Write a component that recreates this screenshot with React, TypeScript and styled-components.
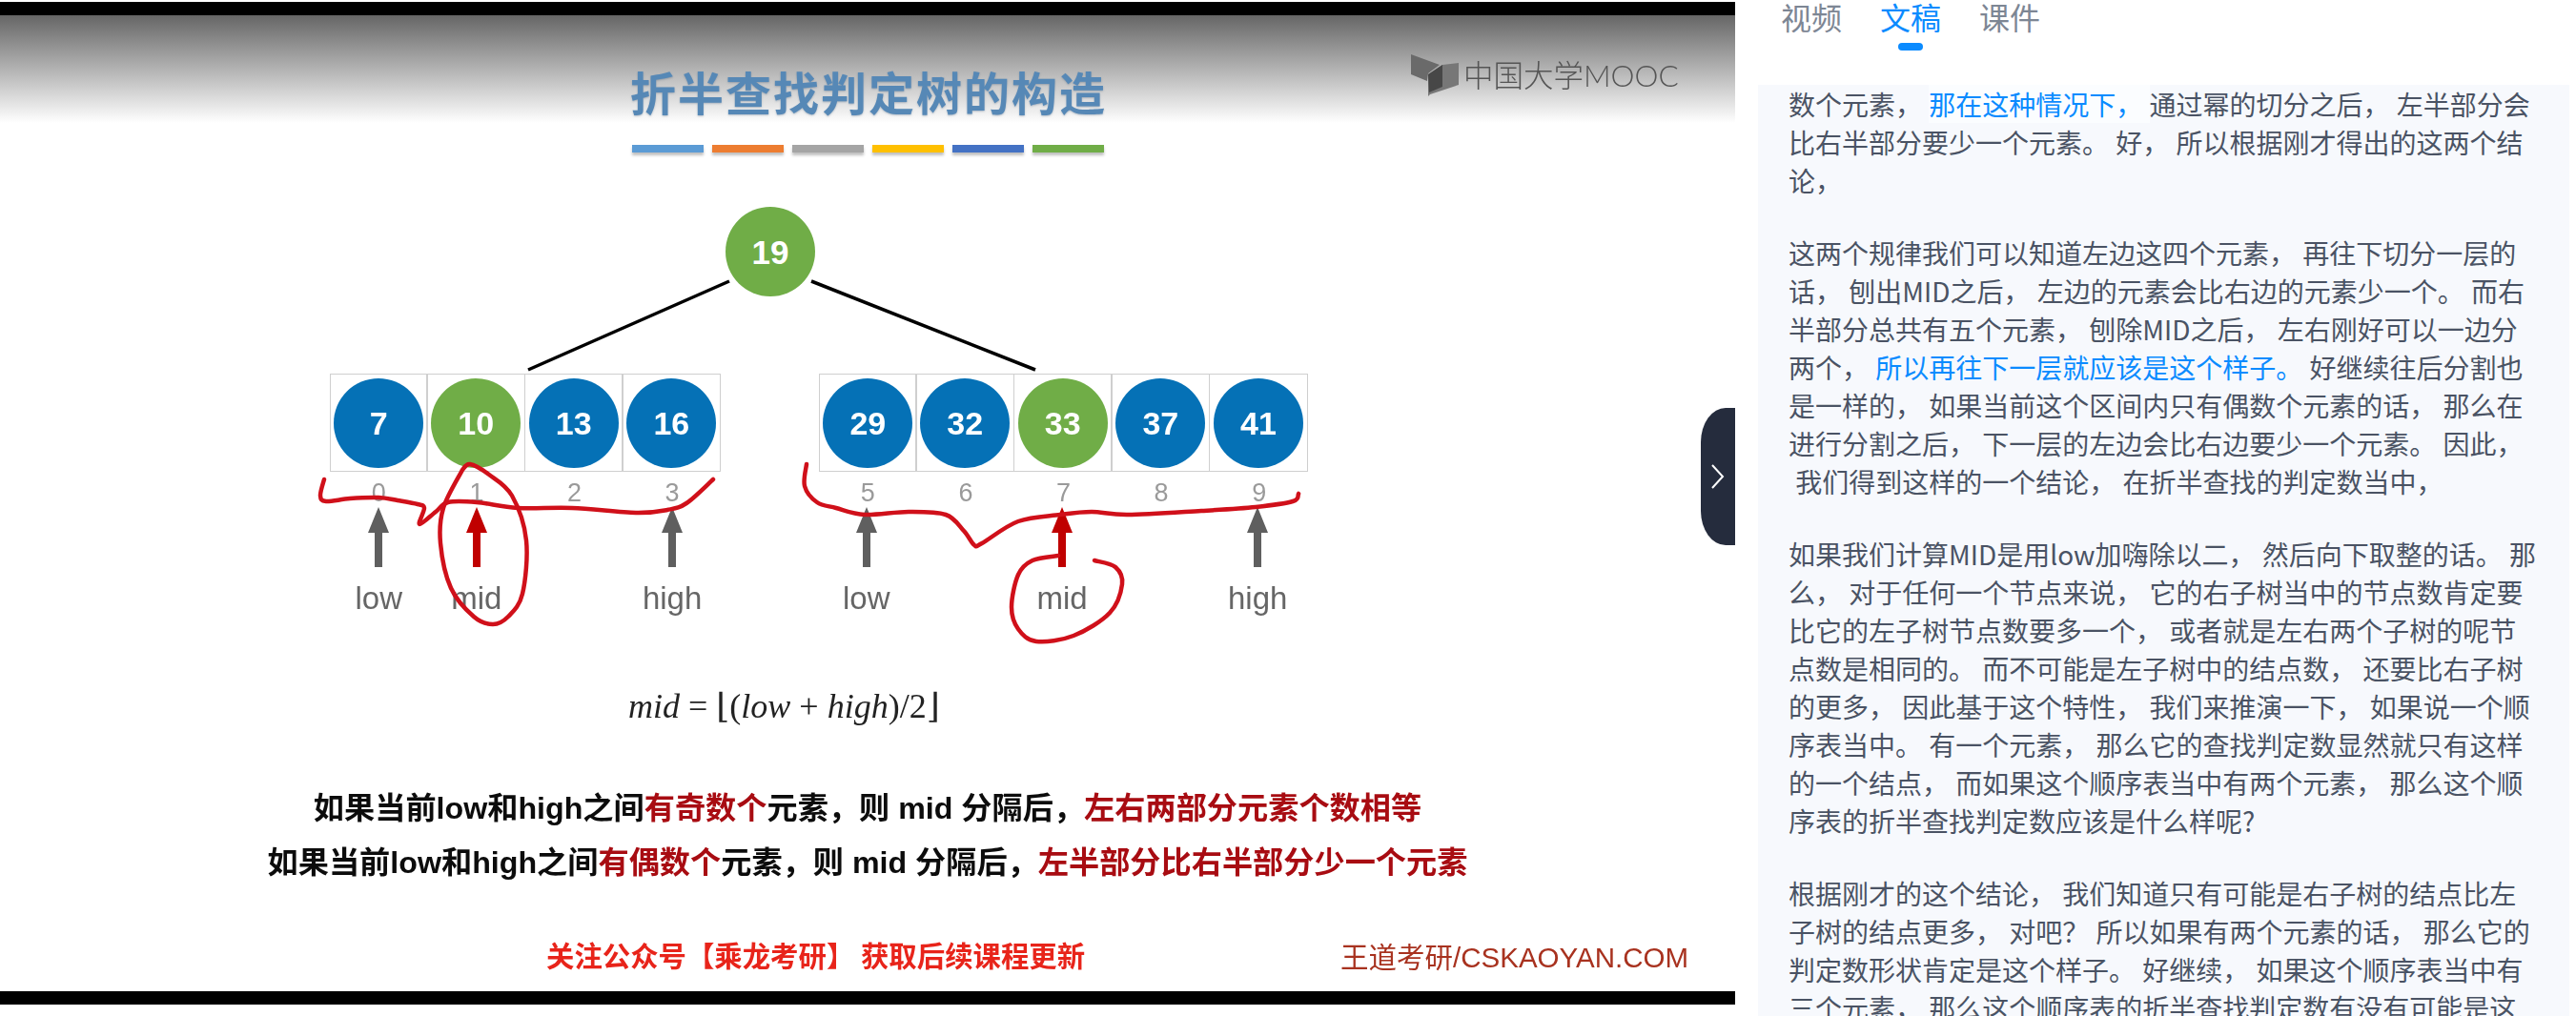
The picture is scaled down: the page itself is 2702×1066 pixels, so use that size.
import React from 'react';
import styled, { createGlobalStyle } from 'styled-components';

const CJK = '"Noto Sans CJK SC", sans-serif';
const ARIAL_CJK = '"Liberation Sans", "Noto Sans CJK SC", sans-serif';

const GlobalStyle = createGlobalStyle`
  html, body {
    margin: 0;
    padding: 0;
    background: #fff;
    overflow: hidden;
  }
`;

const Page = styled.div`
  display: flex;
  width: 2702px;
  height: 1066px;
  overflow: hidden;
`;

const VideoColumn = styled.div`
  position: relative;
  flex: 0 0 1820px;
  height: 1052px;
  margin-top: 2px;
`;

const Slide = styled.div`
  height: 100%;
  box-sizing: border-box;
  border-top: 14px solid #000;
  border-bottom: 14px solid #000;
  background: linear-gradient(#666 0, #fff 113px) no-repeat;
  overflow: hidden;
`;

const SlideContent = styled.div`
  position: relative;
  display: flex;
  flex-direction: column;
  height: 100%;
  filter: blur(0.5px);
`;

const Logo = styled.div`
  position: absolute;
  top: 41px;
  left: 1480px;
  display: flex;
  align-items: center;
  gap: 5px;
  color: #555;
  font: 300 31.5px/44px Lato, ${CJK};
  white-space: pre;
`;

const Title = styled.h1`
  margin: 49px 0 0;
  text-align: center;
  color: #5688b6;
  font: 700 48px/60px ${CJK};
  letter-spacing: 2px;
  text-indent: 2px;
  text-shadow: 0 1px 2px rgba(60, 90, 120, 0.35);
`;

const ColourBars = styled.div`
  display: flex;
  justify-content: center;
  gap: 9px;
  margin-top: 27px;
`;

const ColourBar = styled.span<{ $color: string }>`
  width: 75px;
  height: 8px;
  background: ${(p) => p.$color};
  box-shadow: 0 3px 3px rgba(0, 0, 0, 0.25);
`;

const Diagram = styled.div`
  position: relative;
  flex: 0 0 480px;
  margin-top: 40px;
`;

const Node = styled.div<{ $green?: boolean }>`
  display: flex;
  align-items: center;
  justify-content: center;
  width: 94px;
  height: 94px;
  border-radius: 50%;
  background: ${(p) => (p.$green ? '#70ad47' : '#0571b6')};
  color: #fff;
  font: 700 34px/1 "Liberation Sans", sans-serif;
`;

const RootNode = styled(Node)`
  position: absolute;
  left: 761px;
  top: 17px;
  font-size: 35px;
`;

const ArrayGroup = styled.div<{ $left: number; $count: number }>`
  position: absolute;
  left: ${(p) => p.$left}px;
  top: 192px;
  display: grid;
  grid-template-columns: repeat(${(p) => p.$count}, 102.6px);
`;

const Cell = styled.div`
  display: flex;
  flex-direction: column;
  align-items: center;
`;

const CellBox = styled.div`
  display: flex;
  align-items: center;
  justify-content: center;
  align-self: stretch;
  height: 103px;
  box-sizing: border-box;
  border: 1.5px solid #cfcfcf;

  ${Cell}:not(:first-child) > & {
    margin-left: -1.5px;
  }
`;

const IndexText = styled.div`
  margin-top: 7px;
  color: #9a9a9a;
  font: 400 27px/30px "Liberation Sans", sans-serif;
`;

const Pointer = styled.svg<{ $nudge: number }>`
  display: block;
  margin-left: ${(p) => p.$nudge}px;
`;

const PointerLabel = styled.div<{ $nudge: number }>`
  margin: 13px 0 0 ${(p) => p.$nudge}px;
  color: #666;
  font: 300 33px/40px "Liberation Sans", sans-serif;
`;

const InkLayer = styled.svg`
  position: absolute;
  left: 0;
  top: 0;
  pointer-events: none;
`;

const Formula = styled.div`
  margin: 41px 0 0 659px;
  color: #222;
  font: 400 36px/40px "Liberation Serif", "DejaVu Serif", serif;
  white-space: pre;

  i {
    font-style: italic;
  }
`;

const Statements = styled.div`
  margin-top: 59px;
  text-align: center;
  color: #0c0c0c;
  font: 700 32.2px/57px ${ARIAL_CJK};
  white-space: pre;
`;

const Emphasis = styled.span`
  color: #a80c12;
`;

const SlideFooter = styled.div`
  display: flex;
  justify-content: space-between;
  align-items: center;
  margin-top: 47px;
  padding: 0 49px 0 573px;
  white-space: pre;
`;

const FollowNote = styled.span`
  color: #e8241a;
  font: 700 29.4px/40px ${CJK};
`;

const SiteNote = styled.span`
  color: #a8321f;
  font: 400 29.5px/40px ${ARIAL_CJK};
  position: relative;
  top: 4px;
`;

const CollapseHandle = styled.div`
  position: absolute;
  right: 0;
  top: 426px;
  display: flex;
  align-items: center;
  justify-content: center;
  width: 36px;
  height: 144px;
  border-radius: 26px 0 0 26px / 36px 0 0 36px;
  background: #252c3d;
`;

const SidePanel = styled.div`
  flex: 1;
  display: flex;
  flex-direction: column;
  min-width: 0;
`;

const Tabs = styled.div`
  display: flex;
  gap: 40px;
  height: 89px;
  padding-left: 48px;
`;

const Tab = styled.div<{ $active?: boolean }>`
  display: flex;
  flex-direction: column;
  align-items: center;
  gap: 11px;
  color: ${(p) => (p.$active ? '#0b8bff' : '#7d8694')};
  font: 400 32px/34px ${CJK};
`;

const TabDot = styled.span`
  width: 26px;
  height: 8px;
  border-radius: 4px;
  background: #0b8bff;
`;

const Transcript = styled.div`
  flex: 1;
  margin: 0 7px 0 24px;
  padding-left: 32px;
  background: #f7f9fd;
  color: #4a5364;
  font: 400 28px/40px ${CJK};
  word-spacing: 1px;
  overflow: hidden;
`;

const Paragraph = styled.p`
  margin: 0 0 36px;
`;

const Line = styled.span`
  display: block;
  white-space: pre;
`;

const Highlight = styled.span<{ $tint?: boolean }>`
  color: #0b8bff;
  background: ${(p) => (p.$tint ? '#fbfdff' : 'transparent')};
`;

type Pt = [number, number];

// catmull-rom through the traced points, so the pen strokes stay round
function inkPath(pts: Pt[]): string {
  let d = `M${pts[0][0]} ${pts[0][1]}`;
  for (let i = 0; i < pts.length - 1; i++) {
    const a = pts[Math.max(i - 1, 0)];
    const b = pts[i];
    const c = pts[i + 1];
    const e = pts[Math.min(i + 2, pts.length - 1)];
    const c1x = b[0] + (c[0] - a[0]) / 6;
    const c1y = b[1] + (c[1] - a[1]) / 6;
    const c2x = c[0] - (e[0] - b[0]) / 6;
    const c2y = c[1] - (e[1] - b[1]) / 6;
    d += ` C${c1x.toFixed(1)} ${c1y.toFixed(1)} ${c2x.toFixed(1)} ${c2y.toFixed(1)} ${c[0]} ${c[1]}`;
  }
  return d;
}

const inkStrokes: Pt[][] = [
  [[340, 503], [336, 520], [342, 526], [367, 523], [397, 522], [417, 525], [438, 529], [445, 533], [440, 550], [457, 537], [470, 527], [500, 527], [543, 533], [600, 533], [667, 538], [700, 535], [720, 528], [748, 503]],
  [[485, 493], [493, 487], [513, 498], [537, 520], [552, 567], [548, 623], [533, 647], [517, 655], [497, 647], [473, 617], [462, 570], [465, 533], [485, 493]],
  [[846, 487], [844, 510], [857, 527], [877, 533], [907, 540], [953, 537], [992, 540], [1011, 557], [1022, 572], [1030, 570], [1068, 547], [1112, 540], [1145, 537], [1183, 540], [1260, 536], [1317, 532], [1356, 526], [1362, 518]],
  [[1110, 583], [1083, 588], [1068, 603], [1061, 637], [1068, 660], [1087, 673], [1126, 667], [1164, 643], [1177, 613], [1170, 595], [1148, 588]],
];

const barColors = ['#5b9bd5', '#ed7d31', '#a5a5a5', '#ffc000', '#4472c4', '#70ad47'];

type Item = { value: number; index: number; green?: boolean; label?: string };

const leftItems: Item[] = [
  { value: 7, index: 0, label: 'low' },
  { value: 10, index: 1, green: true, label: 'mid' },
  { value: 13, index: 2 },
  { value: 16, index: 3, label: 'high' },
];

const rightItems: Item[] = [
  { value: 29, index: 5, label: 'low' },
  { value: 32, index: 6 },
  { value: 33, index: 7, green: true, label: 'mid' },
  { value: 37, index: 8 },
  { value: 41, index: 9, label: 'high' },
];

// "|" marks the stretches the player is highlighting
const paragraphs: string[][] = [
  [
    '数个元素， |那在这种情况下， |通过幂的切分之后， 左半部分会',
    '比右半部分要少一个元素。 好， 所以根据刚才得出的这两个结',
    '论，',
  ],
  [
    '这两个规律我们可以知道左边这四个元素， 再往下切分一层的',
    '话， 刨出MID之后， 左边的元素会比右边的元素少一个。 而右',
    '半部分总共有五个元素， 刨除MID之后， 左右刚好可以一边分',
    '两个， |所以再往下一层就应该是这个样子。 |好继续往后分割也',
    '是一样的， 如果当前这个区间内只有偶数个元素的话， 那么在',
    '进行分割之后， 下一层的左边会比右边要少一个元素。 因此，',
    ' 我们得到这样的一个结论， 在折半查找的判定数当中，',
  ],
  [
    '如果我们计算MID是用low加嗨除以二， 然后向下取整的话。 那',
    '么， 对于任何一个节点来说， 它的右子树当中的节点数肯定要',
    '比它的左子树节点数要多一个， 或者就是左右两个子树的呢节',
    '点数是相同的。 而不可能是左子树中的结点数， 还要比右子树',
    '的更多， 因此基于这个特性， 我们来推演一下， 如果说一个顺',
    '序表当中。 有一个元素， 那么它的查找判定数显然就只有这样',
    '的一个结点， 而如果这个顺序表当中有两个元素， 那么这个顺',
    '序表的折半查找判定数应该是什么样呢?',
  ],
  [
    '根据刚才的这个结论， 我们知道只有可能是右子树的结点比左',
    '子树的结点更多， 对吧？ 所以如果有两个元素的话， 那么它的',
    '判定数形状肯定是这个样子。 好继续， 如果这个顺序表当中有',
    '三个元素， 那么这个顺序表的折半查找判定数有没有可能是这',
  ],
];

function PointerArrow({ color, nudge }: { color: string; nudge: number }) {
  return (
    <Pointer $nudge={nudge} width="24" height="63" viewBox="0 0 24 63">
      <path d="M12 0 L23 27 H16 V63 H8 V27 H1 Z" fill={color} />
    </Pointer>
  );
}

function ArrayRow({ items, left, nudge }: { items: Item[]; left: number; nudge: number }) {
  return (
    <ArrayGroup $left={left} $count={items.length}>
      {items.map((item) => (
        <Cell key={item.index}>
          <CellBox>
            <Node $green={item.green}>{item.value}</Node>
          </CellBox>
          <IndexText>{item.index}</IndexText>
          {item.label && <PointerArrow nudge={nudge} color={item.green ? '#c00000' : '#5f5f5f'} />}
          {item.label && <PointerLabel $nudge={nudge}>{item.label}</PointerLabel>}
        </Cell>
      ))}
    </ArrayGroup>
  );
}

export default function App() {
  return (
    <Page>
      <GlobalStyle />
      <VideoColumn>
        <Slide>
          <SlideContent>
            <Logo>
              <svg width="50" height="44" viewBox="0 0 50 44">
                <polygon points="0,0 30,11 18,20 17,28 0,21" fill="#6a6a6a" />
                <polygon points="18,21 33,11 50,9 50,32 20,42 18,44" fill="#777" />
                <polygon points="18,21 33,11 33,34 19,40" fill="#474747" />
              </svg>
              中国大学MOOC
            </Logo>
            <Title>折半查找判定树的构造</Title>
            <ColourBars>
              {barColors.map((c) => (
                <ColourBar key={c} $color={c} />
              ))}
            </ColourBars>
            <Diagram>
              <RootNode $green>19</RootNode>
              <ArrayRow items={leftItems} left={346} nudge={0} />
              <ArrayRow items={rightItems} left={859} nudge={-3} />
              <InkLayer width="1820" height="480" viewBox="0 200 1820 480" fill="none">
                <path d="M765 295 L554 388 M851 295 L1086 388" stroke="#000" strokeWidth="3.5" />
                {inkStrokes.map((pts, i) => (
                  <path key={i} d={inkPath(pts)} stroke="#d0101a" strokeWidth="4.5" strokeLinecap="round" strokeLinejoin="round" />
                ))}
              </InkLayer>
            </Diagram>
            <Formula>
              <i>mid</i> = ⌊(<i>low</i> + <i>high</i>)/2⌋
            </Formula>
            <Statements>
              如果当前low和high之间<Emphasis>有奇数个</Emphasis>元素，则 mid 分隔后，<Emphasis>左右两部分元素个数相等</Emphasis>
              <br />
              如果当前low和high之间<Emphasis>有偶数个</Emphasis>元素，则 mid 分隔后，<Emphasis>左半部分比右半部分少一个元素</Emphasis>
            </Statements>
            <SlideFooter>
              <FollowNote>关注公众号【乘龙考研】 获取后续课程更新</FollowNote>
              <SiteNote>王道考研/CSKAOYAN.COM</SiteNote>
            </SlideFooter>
          </SlideContent>
        </Slide>
        <CollapseHandle>
          <svg width="16" height="26" viewBox="0 0 16 26" fill="none">
            <path d="M2 1 L13 13 L2 25" stroke="#fff" strokeWidth="2" />
          </svg>
        </CollapseHandle>
      </VideoColumn>
      <SidePanel>
        <Tabs>
          <Tab>视频</Tab>
          <Tab $active>
            文稿
            <TabDot />
          </Tab>
          <Tab>课件</Tab>
        </Tabs>
        <Transcript>
          {paragraphs.map((lines, p) => (
            <Paragraph key={p}>
              {lines.map((line, l) => (
                <Line key={l}>
                  {line.split('|').map((part, s) =>
                    s % 2 ? (
                      <Highlight key={s} $tint={p === 0}>
                        {part}
                      </Highlight>
                    ) : (
                      part
                    ),
                  )}
                </Line>
              ))}
            </Paragraph>
          ))}
        </Transcript>
      </SidePanel>
    </Page>
  );
}
